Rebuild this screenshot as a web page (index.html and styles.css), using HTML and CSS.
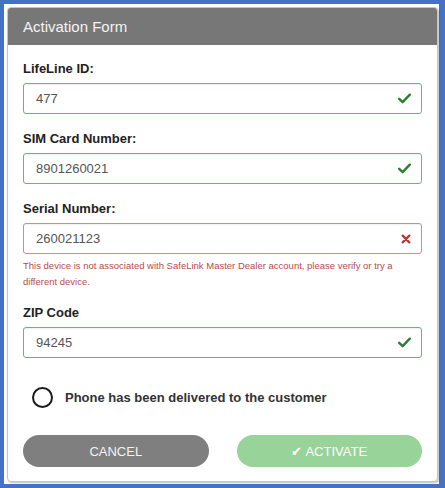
FILE: index.html
```html
<!DOCTYPE html>
<html lang="en">
<head>
<meta charset="utf-8">
<title>Activation Form</title>
<link rel="stylesheet" href="styles.css">
</head>
<body>
<div class="frame">
  <div class="card">
    <div class="card-header">Activation Form</div>
    <div class="card-body">
      <div class="group">
        <label class="label">LifeLine ID:</label>
        <div class="field valid">
          <span class="value">477</span>
          <svg class="icon" viewBox="0 0 14 12" width="13" height="11"><path d="M1.2 6.4 L5 10 L12.8 1.8" fill="none" stroke="#2e7d32" stroke-width="2.6" stroke-linecap="round" stroke-linejoin="round"/></svg>
        </div>
      </div>
      <div class="group">
        <label class="label">SIM Card Number:</label>
        <div class="field valid">
          <span class="value">8901260021</span>
          <svg class="icon" viewBox="0 0 14 12" width="13" height="11"><path d="M1.2 6.4 L5 10 L12.8 1.8" fill="none" stroke="#2e7d32" stroke-width="2.6" stroke-linecap="round" stroke-linejoin="round"/></svg>
        </div>
      </div>
      <div class="group has-error">
        <label class="label">Serial Number:</label>
        <div class="field invalid">
          <span class="value">260021123</span>
          <svg class="icon" viewBox="0 0 12 12" width="10" height="10"><path d="M2 2 L10 10 M10 2 L2 10" fill="none" stroke="#b23b3b" stroke-width="2.8" stroke-linecap="round"/></svg>
        </div>
        <p class="error">This device is not associated with SafeLink Master Dealer account, please verify or try a different device.</p>
      </div>
      <div class="group">
        <label class="label">ZIP Code</label>
        <div class="field valid">
          <span class="value">94245</span>
          <svg class="icon" viewBox="0 0 14 12" width="13" height="11"><path d="M1.2 6.4 L5 10 L12.8 1.8" fill="none" stroke="#2e7d32" stroke-width="2.6" stroke-linecap="round" stroke-linejoin="round"/></svg>
        </div>
      </div>
      <div class="radio-row">
        <span class="radio"></span>
        <span class="radio-text">Phone has been delivered to the customer</span>
      </div>
      <div class="actions">
        <button class="btn cancel">CANCEL</button>
        <button class="btn activate"><span class="check">&#10004;</span>ACTIVATE</button>
      </div>
    </div>
  </div>
</div>
</body>
</html>
```

FILE: styles.css
```css
* { box-sizing: border-box; }
html, body { margin: 0; padding: 0; background: #ffffff; }
body { font-family: "Liberation Sans", Arial, sans-serif; }

.frame {
  width: 445px;
  height: 488px;
  border-style: solid;
  border-color: #4472c4;
  border-width: 4px 6px 4px 4px;
  padding: 3px 1px 2px 3px;
  display: flex;
}

.card {
  flex: 1;
  border: 1px solid #c4c4c4;
  border-radius: 4px;
  box-shadow: 1px 1px 2px rgba(0,0,0,0.25);
  display: flex;
  flex-direction: column;
  background: #fff;
}

.card-header {
  height: 37px;
  background: #777777;
  color: #f4f4f4;
  font-size: 15px;
  line-height: 37px;
  padding-left: 15px;
  border-radius: 3px 3px 0 0;
}

.card-body {
  padding: 16px 15px 15px 15px;
  display: flex;
  flex-direction: column;
}

.group { display: flex; flex-direction: column; margin-bottom: 17px; }
.group.has-error { margin-bottom: 15px; }

.label {
  font-size: 13px;
  font-weight: bold;
  color: #222;
  line-height: 16px;
  margin-bottom: 6px;
}

.field {
  height: 31px;
  border: 1px solid #78ad78;
  border-radius: 3px;
  display: flex;
  align-items: center;
  justify-content: space-between;
  padding: 0 10px 0 12px;
  box-shadow: inset 0 1px 1px rgba(0,0,0,0.06);
}
.field.invalid { border-color: #d38c8c; }
.value { font-size: 13px; color: #555; }
.icon { display: block; }

.error {
  margin: 4px 0 0 0;
  font-size: 9.5px;
  line-height: 16px;
  color: #b44d4a;
}

.radio-row {
  display: flex;
  align-items: center;
  margin-top: 12px;
  padding-left: 9px;
  height: 20px;
}
.radio {
  width: 21px;
  height: 21px;
  border: 2.5px solid #1a1a1a;
  border-radius: 50%;
  margin-right: 12px;
}
.radio-text { font-size: 13px; font-weight: bold; color: #333; }

.actions {
  display: grid;
  grid-template-columns: 1fr 1fr;
  column-gap: 28px;
  margin-top: 28px;
}
.btn {
  height: 32px;
  border: none;
  border-radius: 16px;
  font-family: "Liberation Sans", Arial, sans-serif;
  font-size: 13px;
  color: #f2f2f2;
  display: flex;
  align-items: center;
  justify-content: center;
}
.cancel { background: #7f7f7f; }
.activate { background: #98d39a; color: #ffffff; }
.check { font-size: 13px; margin-right: 3px; }
```
